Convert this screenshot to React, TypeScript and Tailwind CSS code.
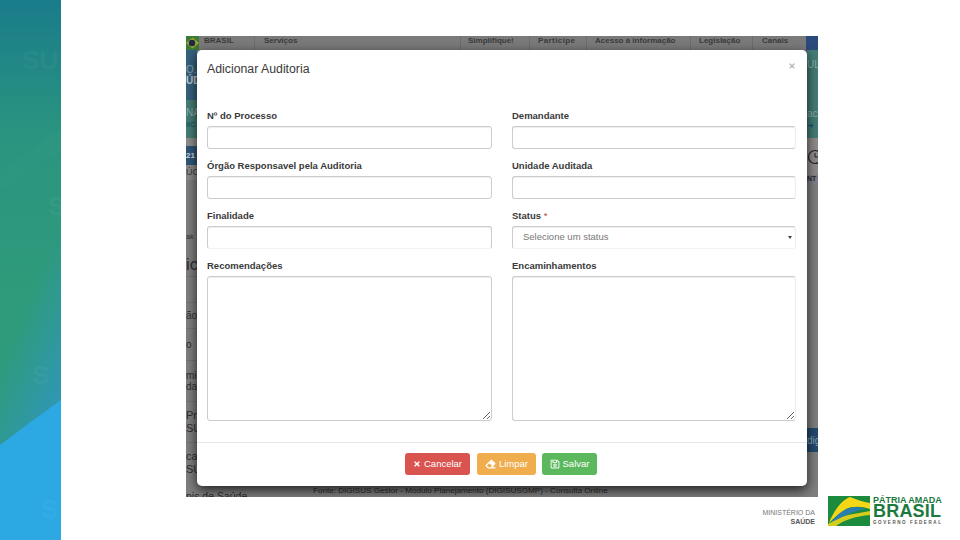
import { FaTimes, FaEraser, FaRegSave } from "react-icons/fa";

const sans = { fontFamily: "'Liberation Sans', Arial, sans-serif" };

function SideArt() {
  return (
    <svg width="61" height="540" viewBox="0 0 61 540" className="block shrink-0">
      <defs>
        <linearGradient id="bar" x1="0" y1="0" x2="0" y2="1">
          <stop offset="0" stopColor="#1a7c8a" />
          <stop offset="0.25" stopColor="#2b9480" />
          <stop offset="0.55" stopColor="#2f9b7a" />
          <stop offset="1" stopColor="#2f9b7a" />
        </linearGradient>
        <linearGradient id="tint" gradientUnits="userSpaceOnUse" x1="10" y1="340" x2="70" y2="365">
          <stop offset="0" stopColor="#2f97b0" stopOpacity="0" />
          <stop offset="1" stopColor="#2f97b0" stopOpacity="1" />
        </linearGradient>
      </defs>
      <rect width="61" height="540" fill="url(#bar)" />
      <rect width="61" height="540" fill="url(#tint)" />
      <path d="M0 172 Q30 150 61 130 L61 150 Q30 170 0 190Z" fill="#ffffff" opacity="0.012" />
      <path d="M0 445 Q30 422 61 400 L61 540 L0 540Z" fill="#2ca8e2" />
      <g fill="#ffffff" opacity="0.03" fontSize="26" fontWeight="700" style={sans}>
        <text x="22" y="69">SU</text>
        <text x="48" y="215">S</text>
        <text x="32" y="384">S</text>
        <text x="41" y="518">S</text>
      </g>
    </svg>
  );
}

function BrazilFlagMark() {
  return (
    <svg width="42" height="30" viewBox="0 0 42 30" className="block">
      <rect width="42" height="30" fill="#1d8b3e" />
      <path d="M1 27 C6 14 14 4 22 1 C28 3 35 6 42 7 L42 13 C33 10 24 10 18 13 C11 17 6 22 1 27Z" fill="#f6d716" />
      <path d="M3 27 C9 18 17 12 27 11 C31 11 35 12 38 13 C30 14 21 17 15 21 C11 23 7 25 3 27Z" fill="#2b7fb0" />
      <path d="M0 30 L0 28 C6 25 13 21 20 19 L42 15 L42 19 C28 20 14 25 8 30Z" fill="#f6d716" opacity="0.85" />
      <path d="M9 30 C17 24 30 20 42 20 L42 30Z" fill="#1d8b3e" />
    </svg>
  );
}

function Field({ label, children }: { label: React.ReactNode; children: React.ReactNode }) {
  return (
    <div className="flex flex-col">
      <label className="h-[16px] text-[9.5px] font-bold leading-[11px] text-[#3a3a3a]">{label}</label>
      {children}
    </div>
  );
}

const inputCls = "block w-full h-[23px] rounded-[3px] border border-[#ccc] bg-white shadow-[inset_0_1px_1px_rgba(0,0,0,0.07)]";
const areaCls = "block h-[145px] w-full rounded-[3px] border border-[#ccc] bg-white shadow-[inset_0_1px_1px_rgba(0,0,0,0.07)]";

export default function App() {
  return (
    <div className="relative flex h-[540px] w-[960px] overflow-hidden bg-white" style={sans}>
      <SideArt />

      <div className="flex flex-1 flex-col pl-[125px] pt-[36px]">
        {/* print screen of the portal, behind the modal */}
        <div className="relative flex h-[461px] w-[632px] flex-col overflow-hidden bg-[#7f7f7f]">
          <div className="flex h-[14px] shrink-0 bg-[#7a7a7a] text-[8px] font-bold leading-[9px] text-[#3a3a3a]">
            <svg width="13" height="14" viewBox="0 0 13 14" className="block shrink-0">
              <rect width="13" height="14" fill="#3d7a35" />
              <path d="M0 7 L6.5 1.5 L13 7 L6.5 12.5Z" fill="#a3a032" />
              <circle cx="6" cy="7" r="3.2" fill="#1c2a45" />
            </svg>
            <span className="ml-[5px] w-[50px]">BRASIL</span>
            <span className="w-[206px] border-l border-[#6c6c6c] pl-[9px]">Serviços</span>
            <span className="w-[69px] border-l border-[#6c6c6c] pl-[7px]">Simplifique!</span>
            <span className="w-[57px] border-l border-[#6c6c6c] pl-[8px] tracking-[0.4px]">Participe</span>
            <span className="w-[104px] border-l border-[#6c6c6c] pl-[8px]">Acesso à informação</span>
            <span className="w-[62px] border-l border-[#6c6c6c] pl-[8px]">Legislação</span>
            <span className="w-[54px] border-l border-[#6c6c6c] pl-[9px]">Canais</span>
            <span className="h-[16px] w-[12px] rounded-bl-[2px] bg-[#2b4a7c]" />
          </div>

          <div className="flex min-h-0 flex-1 justify-between">
            <div className="flex w-[11px] flex-col overflow-hidden whitespace-nowrap text-[#2f2f2f]">
              <div className="flex h-[50px] shrink-0 flex-col items-start justify-center bg-[#36617e] text-[10px] leading-[11px] text-[#8fa6b4]">
                <span>O.D</span>
                <span className="font-bold text-[#c2ccd2]">ÚD</span>
              </div>
              <div className="flex h-[38px] shrink-0 flex-col justify-center bg-[#457d74] text-[10px] leading-[12px] text-[#8fb0aa]">
                <span>NA</span>
                <span className="text-[7px] font-bold text-[#1c5f66]">IIC</span>
              </div>
              <div className="h-[8px] shrink-0 bg-[#8d8d8d]" />
              <div className="flex h-[19px] shrink-0 items-center bg-[#2f5577] text-[8px] font-bold text-[#d5dde2]">21</div>
              <div className="flex h-[15px] shrink-0 items-center bg-[#8a8a8a] text-[9px] text-[#3a3a3a]">ÚC</div>
              <div className="flex h-[62px] shrink-0 items-end text-[7px]">ak</div>
              <div className="h-[34px] shrink-0 pt-[14px] text-[17px] leading-[18px]">ic</div>
              <div className="h-[26px] shrink-0 border-t border-[#737373]" />
              <div className="flex h-[27px] shrink-0 items-center border-y border-[#737373] text-[10px]">ão</div>
              <div className="flex h-[31px] shrink-0 items-center text-[10px]">o</div>
              <div className="flex h-[41px] shrink-0 flex-col justify-center border-t border-[#737373] text-[10px] leading-[11px]">
                <span>mic</span>
                <span>da</span>
              </div>
              <div className="flex h-[41px] shrink-0 flex-col justify-center border-t border-[#737373] text-[11px] leading-[13px]">
                <span>Pr</span>
                <span>SU</span>
              </div>
              <div className="flex h-[41px] shrink-0 flex-col justify-center border-t border-[#737373] text-[11px] leading-[13px]">
                <span>ca</span>
                <span>SU</span>
              </div>
            </div>

            <div className="flex w-[11px] flex-col overflow-hidden whitespace-nowrap">
              <div className="flex h-[88px] shrink-0 flex-col bg-[#447d76] pt-[9px] text-[10px] leading-[12px] text-[#8db0ab]">
                <span>UL</span>
                <span className="mt-[37px]">ac</span>
                <span className="text-[8px] text-[#1a4f7a]">➔</span>
              </div>
              <div className="flex h-[37px] shrink-0 items-center bg-[#8f8b8b]">
                <svg width="11" height="16" viewBox="0 0 11 16" className="block">
                  <circle cx="8" cy="8" r="6.5" fill="none" stroke="#222" strokeWidth="1.2" />
                  <path d="M8 4 V8 H11" fill="none" stroke="#222" strokeWidth="1" />
                </svg>
              </div>
              <div className="flex h-[8px] shrink-0 items-center bg-[#7d7f8a] text-[7px] font-bold text-[#2a2a2a]">NT</div>
              <div className="h-[245px] shrink-0" />
              <div className="flex h-[24px] shrink-0 items-center bg-[#234a70] text-[10px] text-[#8ea3b5]">dig</div>
            </div>
          </div>

          <div className="flex h-[11px] shrink-0 items-start text-[8.1px] leading-[10px] text-[#2b2b2b]">
            <span className="mt-[5px] w-[127px] text-[10.5px] leading-[11px]">nis de Saúde</span>
            <span>Fonte: DIGISUS Gestor - Módulo Planejamento (DIGISUSGMP) - Consulta Online</span>
          </div>

          {/* modal */}
          <div className="absolute left-[11px] top-[14px] flex h-[436px] w-[610px] flex-col rounded-[5px] bg-white shadow-[0_4px_12px_rgba(0,0,0,0.75)]">
            <div className="flex h-[60px] shrink-0 items-start justify-between pl-[10px] pr-[11px] pt-[11px]">
              <h4 className="text-[12.3px] leading-[16px] text-[#3a3a3a]">Adicionar Auditoria</h4>
              <FaTimes className="mt-[1px] h-[8px] w-[8px] text-[#bbb]" />
            </div>

            <form className="grid grid-cols-[285px_284px] gap-x-[20px] gap-y-[11px] pl-[10px]">
              <Field label="Nº do Processo"><input className={inputCls} /></Field>
              <Field label="Demandante"><input className={`${inputCls} border-r-[#eee]`} /></Field>
              <Field label="Órgão Responsavel pela Auditoria"><input className={inputCls} /></Field>
              <Field label="Unidade Auditada"><input className={`${inputCls} border-r-[#eee]`} /></Field>
              <Field label="Finalidade"><input className={`${inputCls} border-b-[#f2f2f2]`} /></Field>
              <Field label={<>Status <span className="font-normal text-[#a94442]">*</span></>}>
                <div className={`${inputCls} flex items-center justify-between border-r-[#eee] border-b-[#f2f2f2] pl-[10px] pr-[3px] text-[9.5px] text-[#777]`}>
                  <span>Selecione um status</span>
                  <span className="h-0 w-0 border-x-[2px] border-t-[3px] border-x-transparent border-t-[#444]" />
                </div>
              </Field>
              <Field label="Recomendações">
                <textarea className={areaCls} />
              </Field>
              <Field label="Encaminhamentos">
                <textarea className={`${areaCls} border-r-[#eee]`} />
              </Field>
            </form>

            <div className="mt-[21px] flex flex-1 items-start justify-center border-t border-[#e5e5e5] pr-[2px] pt-[10px] text-[9.5px] text-white">
              <button type="button" className="flex h-[22px] w-[65px] items-center justify-center gap-[3px] rounded-[3px] bg-[#d9534f]">
                <FaTimes className="h-[8px] w-[8px]" /> Cancelar
              </button>
              <button type="button" className="ml-[7px] flex h-[22px] w-[59px] items-center justify-center gap-[3px] rounded-[3px] bg-[#f0ad4e]">
                <FaEraser className="h-[10px] w-[11px]" /> Limpar
              </button>
              <button type="button" className="ml-[6px] flex h-[22px] w-[55px] items-center justify-center gap-[3px] rounded-[3px] bg-[#5cb85c]">
                <FaRegSave className="h-[10px] w-[10px]" /> Salvar
              </button>
            </div>
          </div>
        </div>

        {/* logos */}
        <div className="mt-[-1px] flex items-start">
          <div className="ml-[577px] mt-[12px] flex w-[52px] flex-col items-end text-[7px] leading-[9px]">
            <span className="whitespace-nowrap text-[#777]">MINISTÉRIO DA</span>
            <span className="font-bold text-[#555]">SAÚDE</span>
          </div>
          <div className="ml-[13px]">
            <BrazilFlagMark />
          </div>
          <div className="ml-[3px] flex flex-col text-[#1c7a3e]">
            <span className="whitespace-nowrap text-[9px] font-bold leading-[9px]">PÁTRIA AMADA</span>
            <span className="text-[18px] font-bold leading-[13px] tracking-[0.2px]">BRASIL</span>
            <span className="mt-[2px] whitespace-nowrap text-[4.5px] font-bold leading-[6px] tracking-[1.6px] text-[#555]">GOVERNO FEDERAL</span>
          </div>
        </div>
      </div>
    </div>
  );
}
